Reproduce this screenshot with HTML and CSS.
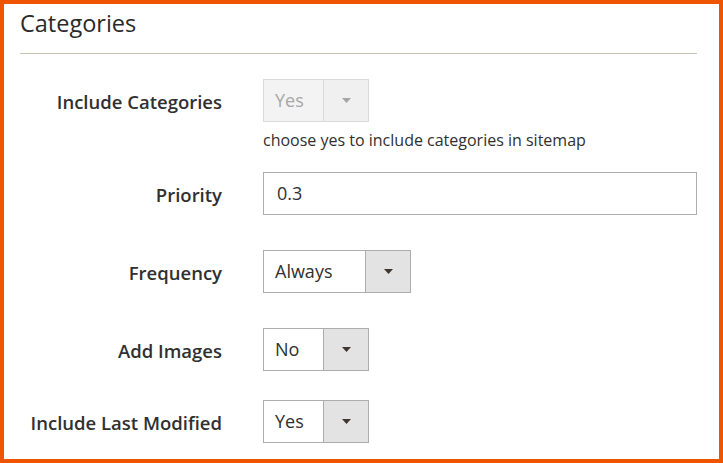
FILE: index.html
```html
<!DOCTYPE html>
<html lang="en">
<head>
<meta charset="utf-8">
<title>Categories</title>
<link rel="stylesheet" href="styles.css">
</head>
<body>
<div class="frame">
  <div class="section-title">Categories</div>
  <div class="form">
    <div class="row row-first">
      <div class="label">Include Categories</div>
      <div class="control">
        <div class="select select-disabled w-small">
          <span class="value">Yes</span>
          <span class="button"><svg width="9" height="5" viewBox="0 0 9 5"><path d="M0 0h9L4.5 5z"/></svg></span>
        </div>
        <div class="note">choose yes to include categories in sitemap</div>
      </div>
    </div>
    <div class="row row-priority">
      <div class="label">Priority</div>
      <div class="control">
        <div class="input">0.3</div>
      </div>
    </div>
    <div class="row row-frequency">
      <div class="label">Frequency</div>
      <div class="control">
        <div class="select w-large">
          <span class="value">Always</span>
          <span class="button"><svg width="9" height="5" viewBox="0 0 9 5"><path d="M0 0h9L4.5 5z"/></svg></span>
        </div>
      </div>
    </div>
    <div class="row row-images">
      <div class="label">Add Images</div>
      <div class="control">
        <div class="select w-small">
          <span class="value">No</span>
          <span class="button"><svg width="9" height="5" viewBox="0 0 9 5"><path d="M0 0h9L4.5 5z"/></svg></span>
        </div>
      </div>
    </div>
    <div class="row row-modified">
      <div class="label">Include Last Modified</div>
      <div class="control">
        <div class="select w-small">
          <span class="value">Yes</span>
          <span class="button"><svg width="9" height="5" viewBox="0 0 9 5"><path d="M0 0h9L4.5 5z"/></svg></span>
        </div>
      </div>
    </div>
  </div>
</div>
</body>
</html>
```
FILE: styles.css
```css
* { box-sizing: border-box; }
html, body { margin: 0; padding: 0; }
body {
  width: 723px;
  height: 463px;
  overflow: hidden;
  background: #ffffff;
  font-family: "Open Sans", "Noto Sans", sans-serif;
  color: #303030;
}
.frame {
  width: 723px;
  height: 463px;
  border: 4px solid #ef5500;
  padding: 0 22px 0 16px;
}
.section-title {
  margin-top: 4px;
  font-size: 23.5px;
  font-weight: 400;
  line-height: 31px;
  color: #2a2a2a;
  padding-bottom: 14px;
  border-bottom: 1px solid #cac3b4;
}
.form { display: flex; flex-direction: column; }
.row {
  display: grid;
  grid-template-columns: 202px 1fr;
  column-gap: 41px;
}
.row-first { margin-top: 25px; }
.row-priority { margin-top: 20px; }
.row-frequency { margin-top: 35px; }
.row-images { margin-top: 35px; }
.row-modified { margin-top: 29px; }
.label {
  height: 43px;
  text-align: right;
  font-size: 18.5px;
  font-weight: 600;
  line-height: 41px;
  padding-top: 2px;
  color: #303030;
  white-space: nowrap;
}
.control { display: flex; flex-direction: column; align-items: flex-start; }
.select {
  display: flex;
  height: 43px;
  border: 1px solid #adadad;
  background: #ffffff;
  font-size: 18px;
  line-height: 41px;
  color: #303030;
}
.w-small { width: 106px; }
.w-large { width: 148px; }
.select .value { flex: 1; padding-left: 11px; }
.select .button {
  width: 45px;
  border-left: 1px solid #adadad;
  background: #e3e3e3;
  display: flex;
  align-items: center;
  justify-content: center;
}
.select .button svg { fill: #41362f; }
.select-disabled {
  border-color: #dadada;
  background: #f3f3f3;
  color: #a7a7a7;
}
.select-disabled .button {
  border-left-color: #dadada;
  background: #f0f0f0;
}
.select-disabled .button svg { fill: #a5a5a5; }
.note {
  margin-top: 6px;
  font-size: 16px;
  line-height: 24px;
  color: #303030;
}
.input {
  width: 100%;
  height: 43px;
  border: 1px solid #adadad;
  padding-left: 13px;
  font-size: 18px;
  line-height: 41px;
  color: #303030;
}
```
